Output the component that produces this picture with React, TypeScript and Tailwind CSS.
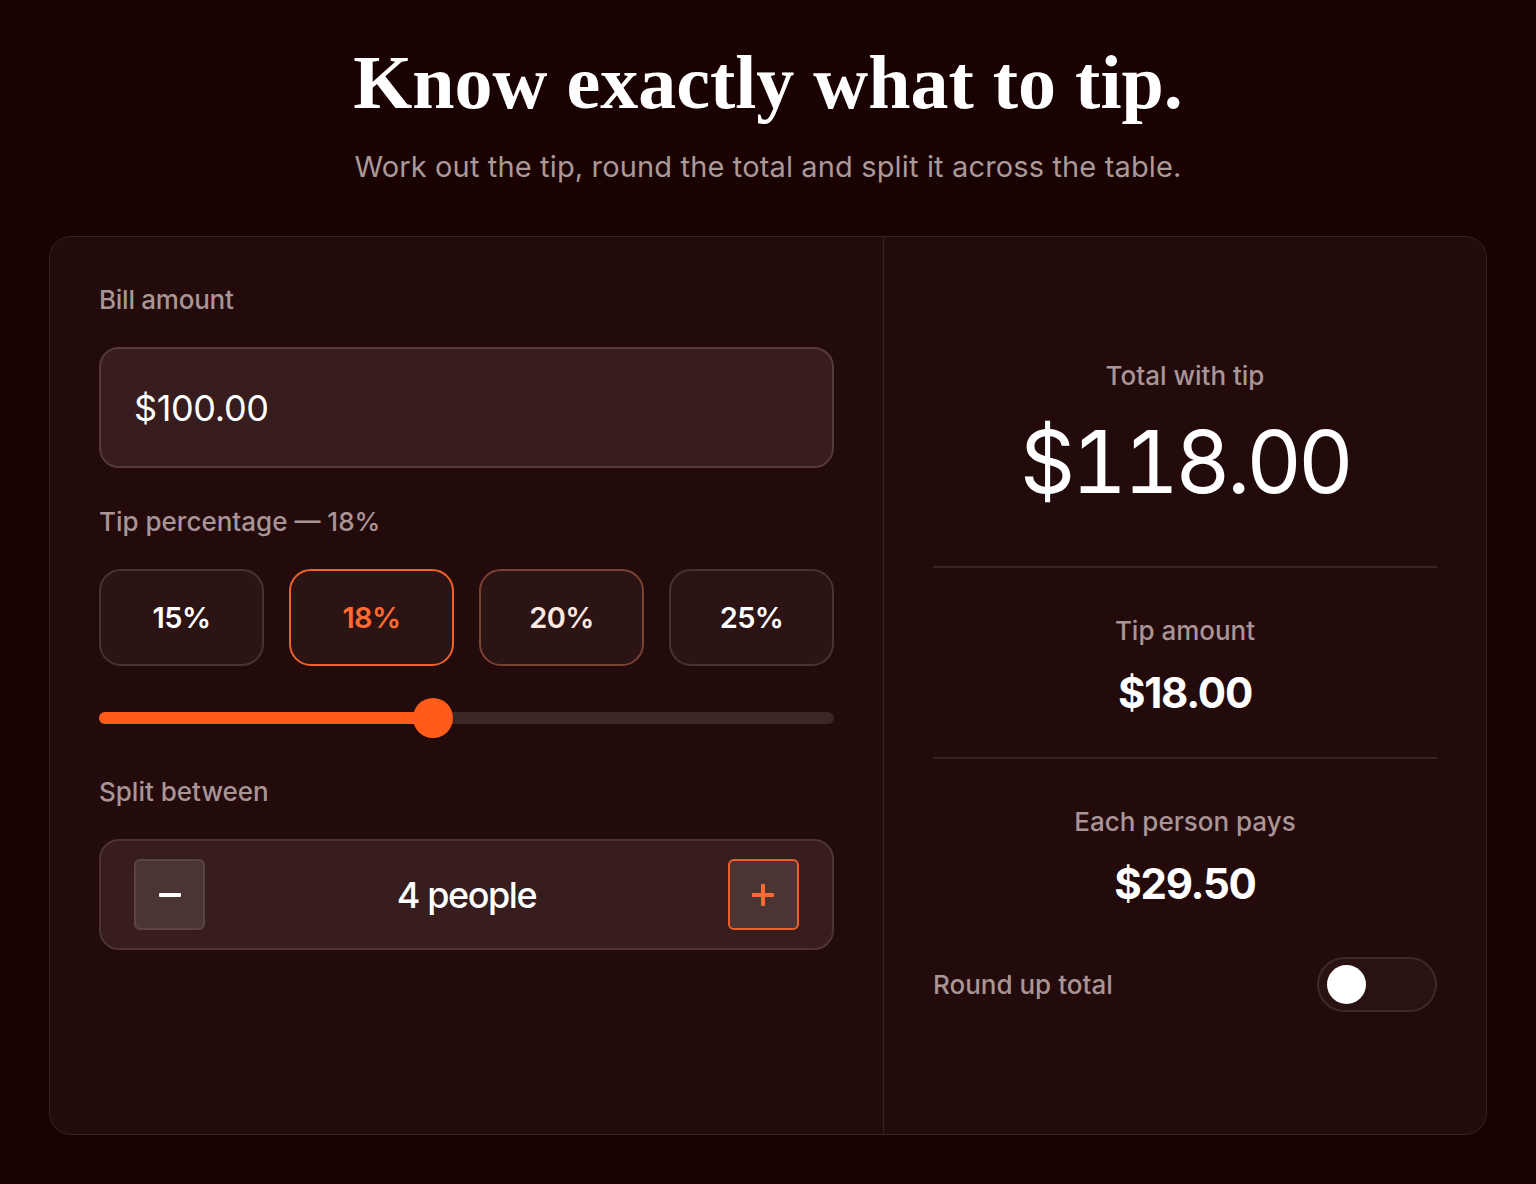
import React from "react";

const sans = { fontFamily: "Inter, 'Noto Sans', sans-serif" };

export default function App() {
  return (
    <div
      className="min-h-[1184px] w-full bg-[#1a0102] px-[49px] pt-[40px] pb-[48px] text-white"
      style={sans}
    >
      <h1
        className="text-center text-[76px] font-bold leading-[84px] tracking-[0em] text-white"
        style={{ fontFamily: "'Liberation Serif', 'Times New Roman', serif" }}
      >
        Know exactly what to tip.
      </h1>
      <p className="mt-[25px] text-center text-[29px] leading-[36px] tracking-[0.005em] text-[#ab9999]">
        Work out the tip, round the total and split it across the table.
      </p>

      <div className="mt-[51px] flex h-[899px] rounded-[22px] border border-[#3a2222] bg-[#230a0b]">
        {/* Left column */}
        <div className="flex w-[834px] flex-col border-r border-[#3a2222] px-[49px] pt-[47px]">
          <div className="text-[26px] font-medium leading-[32px] tracking-[-0.01em] text-[#a99596]">
            Bill amount
          </div>
          <div className="mt-[31px] flex h-[121px] items-center rounded-[20px] border-2 border-[#543a3a] bg-[#381d1e] px-[33px] text-[36px] leading-none tracking-[-0.01em] text-white">
            $100.00
          </div>

          <div className="mt-[38px] text-[26px] font-medium leading-[32px] tracking-[0em] text-[#a99596]">
            Tip percentage — 18%
          </div>
          <div className="mt-[31px] grid grid-cols-4 gap-[25px]">
            {[
              { t: "15%", b: "border-[#4a3232]", c: "text-white" },
              { t: "18%", b: "border-[#f0622c]", c: "text-[#ff6a32]" },
              { t: "20%", b: "border-[#7a4232]", c: "text-[#ffe8e0]" },
              { t: "25%", b: "border-[#4a3232]", c: "text-white" },
            ].map((o) => (
              <div
                key={o.t}
                className={`flex h-[97px] items-center justify-center rounded-[22px] border-2 bg-[#2c1314] text-[29px] font-semibold tracking-[-0.02em] ${o.b} ${o.c}`}
              >
                {o.t}
              </div>
            ))}
          </div>

          <div className="relative mt-[32px] flex h-[40px] items-center">
            <div className="h-[12px] w-full rounded-full bg-[#3e2626]">
              <div className="h-full w-[334px] rounded-full bg-[#ff5c1c]" />
            </div>
            <div className="absolute left-[314px] top-0 h-[40px] w-[40px] rounded-full bg-[#ff5c1c]" />
          </div>

          <div className="mt-[38px] text-[26px] font-medium leading-[32px] tracking-[0em] text-[#a99596]">
            Split between
          </div>
          <div className="mt-[31px] flex h-[111px] items-center justify-between rounded-[20px] border-2 border-[#4c3434] bg-[#381d1e] px-[33px]">
            <div className="flex h-[71px] w-[71px] items-center justify-center rounded-[6px] border-2 border-[#5a4343] bg-[#4a3434]">
              <div className="h-[4px] w-[22px] rounded-[1px] bg-white" />
            </div>
            <div className="text-[36px] font-medium tracking-[-0.04em] text-white">4 people</div>
            <div className="relative flex h-[71px] w-[71px] items-center justify-center rounded-[6px] border-2 border-[#e8602c] bg-[#4a3434]">
              <div className="absolute h-[4px] w-[22px] rounded-[1px] bg-[#ff6a32]" />
              <div className="absolute h-[22px] w-[4px] rounded-[1px] bg-[#ff6a32]" />
            </div>
          </div>
        </div>

        {/* Right column */}
        <div className="flex flex-1 flex-col justify-center px-[49px]">
          <div className="text-center text-[26px] font-medium leading-[32px] tracking-[0em] text-[#a99596]">
            Total with tip
          </div>
          <div className="mt-[26px] text-center text-[86px] leading-[88px] tracking-[-0.045em] text-white tabular-nums">
            $118.00
          </div>
          <div className="mt-[60px] h-[2px] bg-[#3a2222]" />

          <div className="mt-[47px] text-center text-[26px] font-medium leading-[32px] tracking-[0em] text-[#a99596]">
            Tip amount
          </div>
          <div className="mt-[22px] text-center text-[42px] font-bold leading-[48px] tracking-[-0.03em] text-white">
            $18.00
          </div>
          <div className="mt-[40px] h-[2px] bg-[#3a2222]" />

          <div className="mt-[47px] text-center text-[26px] font-medium leading-[32px] tracking-[0em] text-[#a99596]">
            Each person pays
          </div>
          <div className="mt-[22px] text-center text-[42px] font-bold leading-[48px] tracking-[-0.03em] text-white">
            $29.50
          </div>

          <div className="mt-[49px] flex items-center justify-between">
            <div className="text-[26px] font-medium tracking-[0em] text-[#a99596]">
              Round up total
            </div>
            <div className="flex h-[55px] w-[120px] items-center rounded-full border-2 border-[#3e2828] bg-[#2a1213] pl-[8px]">
              <div className="h-[39px] w-[39px] rounded-full bg-white" />
            </div>
          </div>
        </div>
      </div>
    </div>
  );
}
